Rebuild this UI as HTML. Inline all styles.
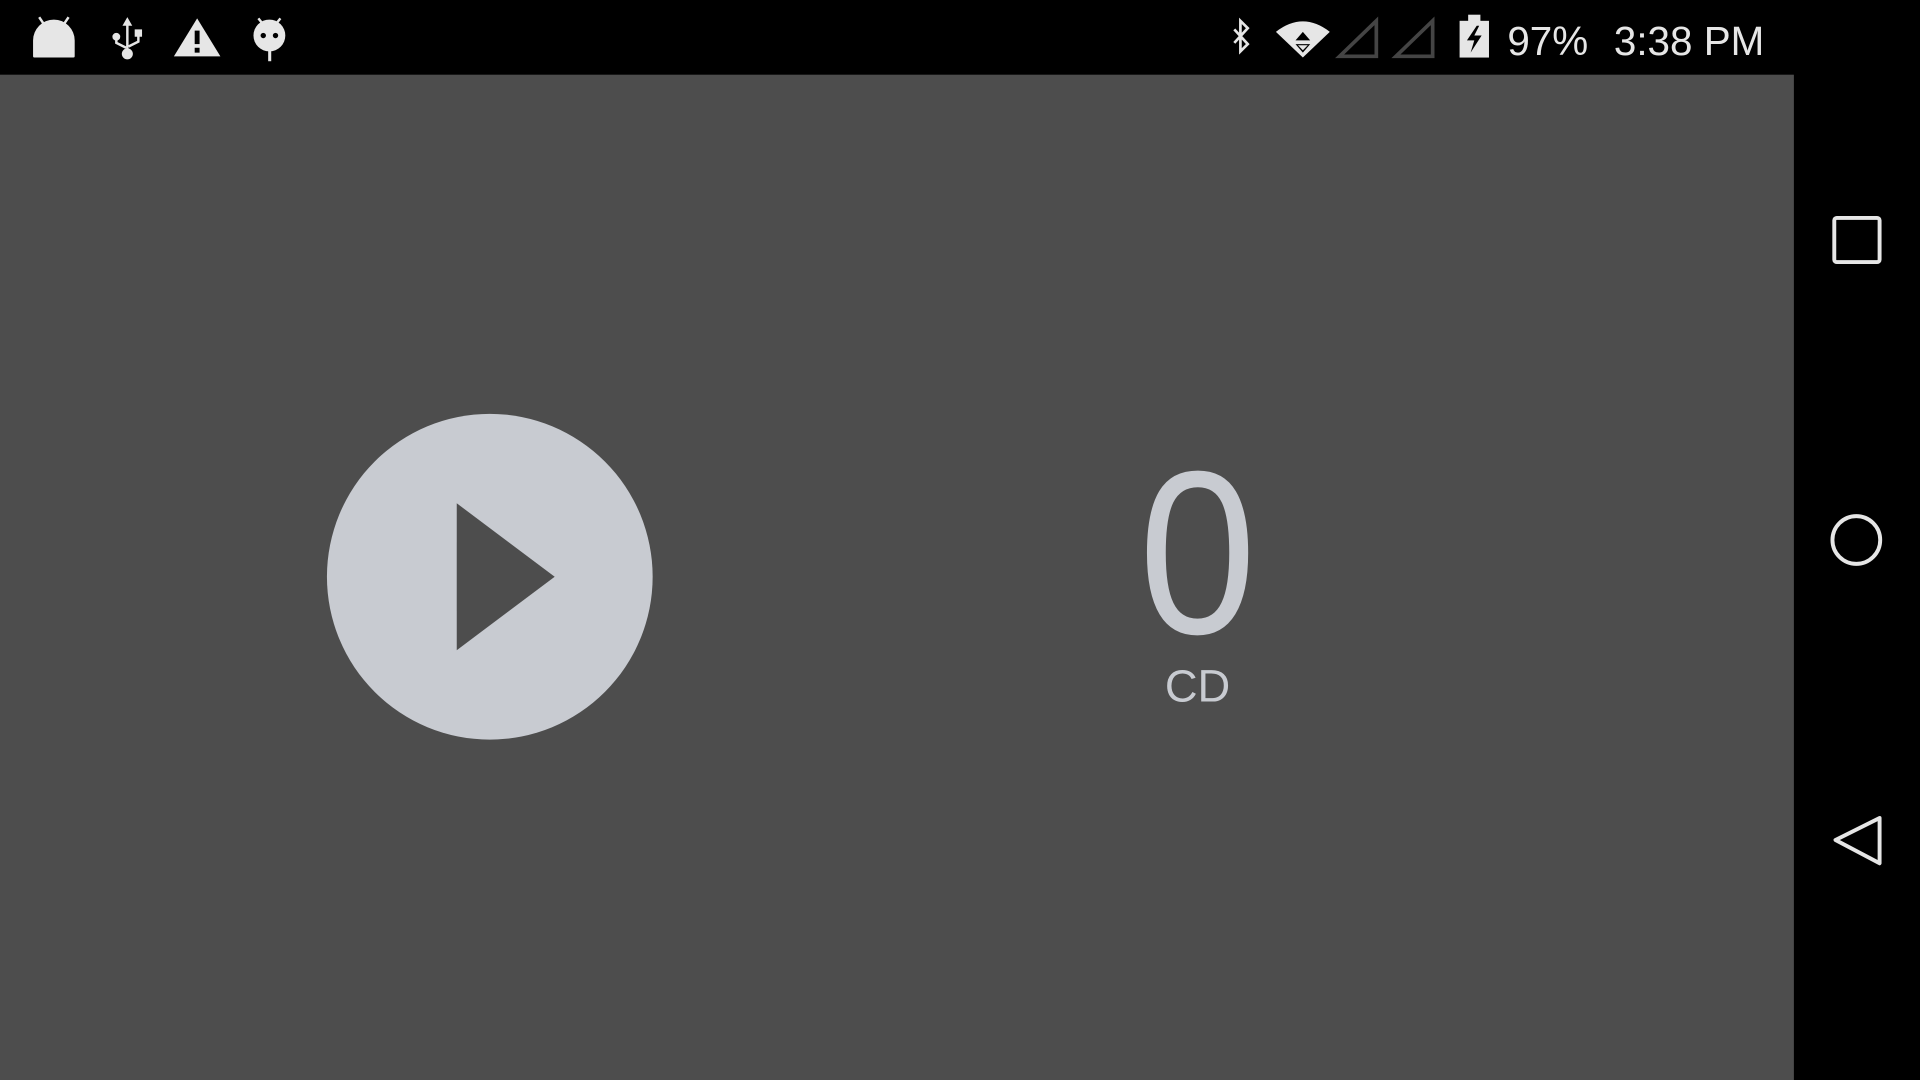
<!DOCTYPE html>
<html><head><meta charset="utf-8"><style>
html,body{margin:0;padding:0;background:#000;width:1920px;height:1080px;overflow:hidden}
svg{display:block}
</style></head><body>
<svg width="1920" height="1080" viewBox="0 0 1568 882" xmlns="http://www.w3.org/2000/svg">
<rect width="1568" height="882" fill="#000"/>
<rect x="0" y="61" width="1465" height="821" fill="#4d4d4d"/>
<g fill="#e6e6e6">
 <path d="M27 46 V33 A17 17 0 0 1 61 33 V46 Q61 47 60 47 H28 Q27 47 27 46Z"/>
 <path d="M32 14 L36 20 M56 14 L52 20" stroke="#e6e6e6" stroke-width="2"/>
 <path d="M104 14 L100 21 H103 V40 H105 V21 H108Z"/>
 <path d="M95 31 V35 L103 39 M113 29 V34 L105 38" stroke="#e6e6e6" stroke-width="2" fill="none"/>
 <circle cx="95" cy="30" r="3.2"/><rect x="110" y="24" width="6" height="6"/>
 <circle cx="104" cy="44" r="4.5"/>
 <path d="M161 15 L180 46 H142Z"/>
 <rect x="159" y="25" width="4" height="11" fill="#000"/><rect x="159" y="39" width="4" height="4" fill="#000"/>
 <circle cx="220" cy="29" r="13"/>
 <rect x="219" y="40" width="2.5" height="10"/>
 <path d="M211 15 L215 20 M229 15 L225 20" stroke="#e6e6e6" stroke-width="2"/>
 <circle cx="215" cy="29" r="2.2" fill="#000"/><circle cx="225" cy="29" r="2.2" fill="#000"/>
</g>
<g fill="#e6e6e6">
 <path d="M1008 24 L1019 36 L1013 42 V17 L1019 23 L1008 35" stroke="#e6e6e6" stroke-width="2.2" fill="none"/>
 <path d="M1042 26 Q1064 9 1086 26 L1064 47Z"/>
 <path d="M1064 26 L1070 33 H1058Z" fill="#000"/><path d="M1058 36 H1070 L1064 43Z" fill="#000"/>
 <path d="M1060 37 H1068 L1064 41Z" fill="#e6e6e6"/>
 <path d="M1094 46 L1124 17 V46Z" fill="none" stroke="#444" stroke-width="3"/>
 <path d="M1140 46 L1170 17 V46Z" fill="none" stroke="#444" stroke-width="3"/>
 <rect x="1192" y="17" width="24" height="30"/><rect x="1199" y="12" width="10" height="6"/>
 <path d="M1206 21 L1198 33 H1204 L1201 43 L1210 29 H1204 L1208 21Z" fill="#000"/>
 <text x="1231" y="45" font-family="Liberation Sans, sans-serif" font-size="33" fill="#e6e6e6">97%</text>
 <text x="1318" y="45" font-family="Liberation Sans, sans-serif" font-size="33" fill="#e6e6e6">3:38 PM</text>
</g>
<circle cx="400" cy="471" r="133" fill="#c8cbd1"/>
<path d="M373 411 L453 471 L373 531Z" fill="#4d4d4d"/>
<text transform="translate(978 517) scale(0.91 1)" text-anchor="middle" font-family="Liberation Sans, sans-serif" font-size="190" fill="#c8cbd1">0</text>
<text x="978" y="573" text-anchor="middle" font-family="Liberation Sans, sans-serif" font-size="37" fill="#c8cbd1">CD</text>
<g fill="none" stroke="#e6e6e6" stroke-width="3.2">
 <rect x="1498" y="178" width="37" height="36" rx="2"/>
 <circle cx="1516" cy="441" r="19.5"/>
 <path d="M1535 668 L1499 686 L1535 705Z" stroke-linejoin="round"/>
</g>
</svg>
</body></html>
